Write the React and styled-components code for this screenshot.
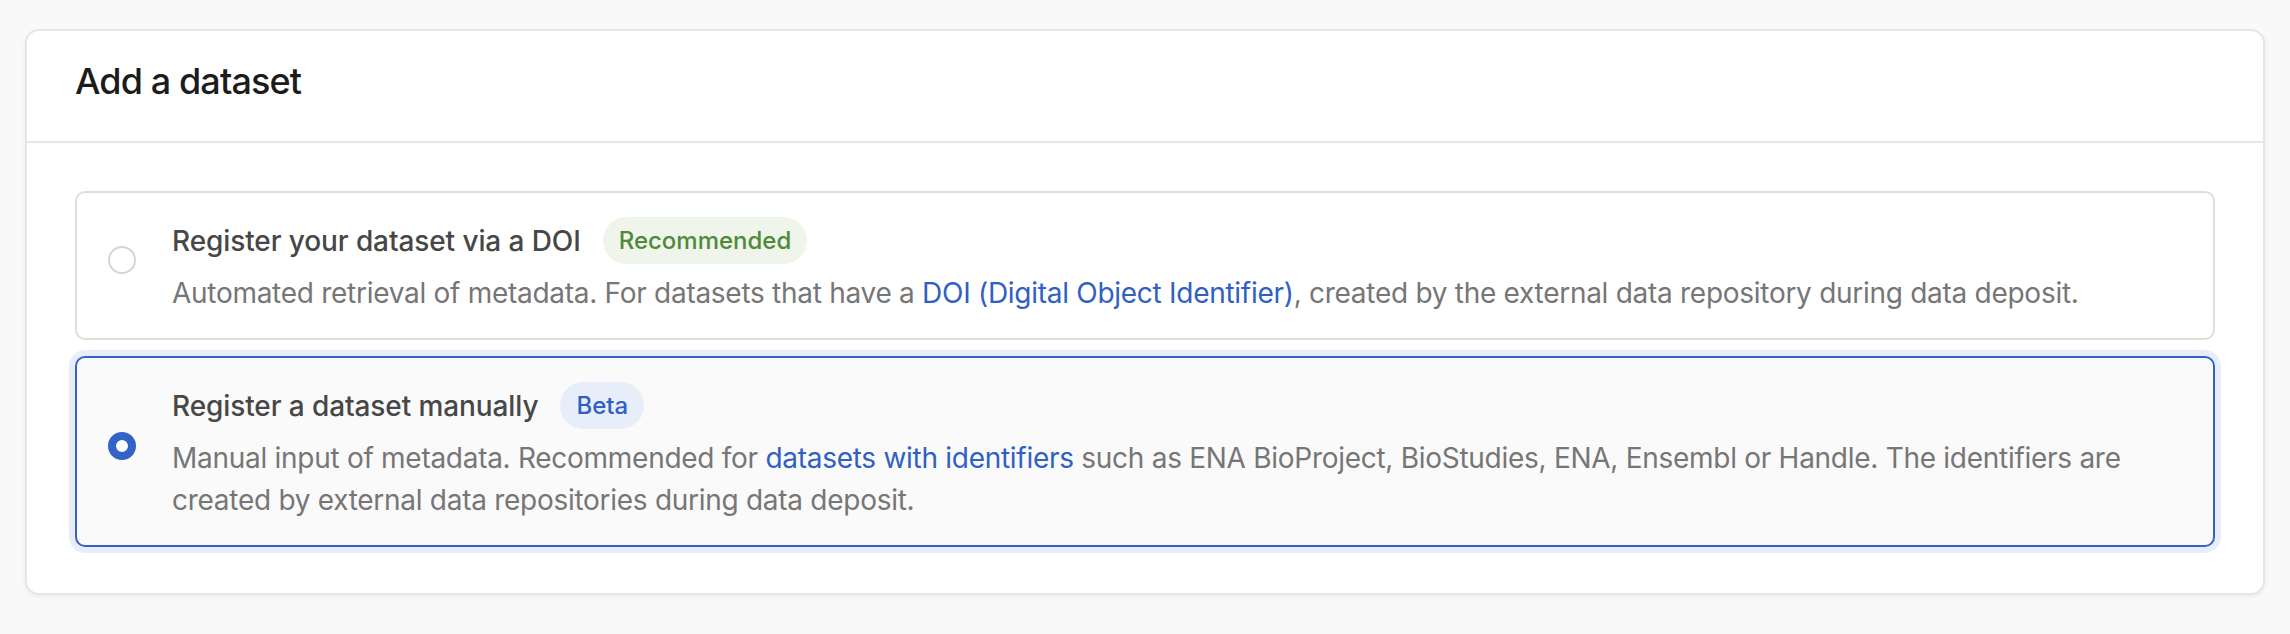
import styled, { createGlobalStyle } from "styled-components"

const GlobalStyle = createGlobalStyle`
  html, body {
    margin: 0;
    background: #f9f9f9;
    font-family: Inter, "Noto Sans", sans-serif;
  }
`;

const options = [
  {
    id: "doi",
    title: "Register your dataset via a DOI",
    badge: "Recommended",
    tone: "green",
    before: "Automated retrieval of metadata. For datasets that have a ",
    link: "DOI (Digital Object Identifier)",
    after: ", created by the external data repository during data deposit.",
  },
  {
    id: "manual",
    title: "Register a dataset manually",
    badge: "Beta",
    tone: "blue",
    before: "Manual input of metadata. Recommended for ",
    link: "datasets with identifiers",
    after:
      " such as ENA BioProject, BioStudies, ENA, Ensembl or Handle. The identifiers are created by external data repositories during data deposit.",
  },
];

export default function App() {
  const selected = "manual";

  return (
    <Page>
      <GlobalStyle />
      <Card>
        <Header>
          <Heading>Add a dataset</Heading>
        </Header>
        <Body>
          {options.map((opt) => (
            <Option key={opt.id} $active={opt.id === selected}>
              <Radio $checked={opt.id === selected} />
              <Content>
                <TitleRow>
                  <Title>{opt.title}</Title>
                  <Badge $tone={opt.tone}>{opt.badge}</Badge>
                </TitleRow>
                <Desc>
                  {opt.before}
                  <Link href="#">{opt.link}</Link>
                  {opt.after}
                </Desc>
              </Content>
            </Option>
          ))}
        </Body>
      </Card>
    </Page>
  );
}

const Page = styled.div`
  padding: 29px 25px 38px;
`;

const Card = styled.div`
  background: #fff;
  border: 2px solid #e6e6e6;
  border-radius: 14px;
  box-shadow: 0 2px 4px rgba(0, 0, 0, 0.05);
`;

const Header = styled.div`
  padding: 23px 48px 33px;
  border-bottom: 2px solid #e6e6e6;
`;

const Heading = styled.h2`
  margin: 0;
  font-size: 36px;
  line-height: 54px;
  font-weight: 500;
  letter-spacing: -0.9px;
  color: #1c1c1c;
`;

const Body = styled.div`
  padding: 48px 48px 46px;
  display: flex;
  flex-direction: column;
  gap: 16px;
`;

const Option = styled.label`
  display: flex;
  align-items: center;
  gap: 36px;
  padding: 24px 32px 24px 31px;
  border-radius: 10px;
  border: 2px solid ${(p) => (p.$active ? "#3363c6" : "#dedede")};
  background: ${(p) => (p.$active ? "#fafafa" : "#fff")};
  box-shadow: ${(p) => (p.$active ? "0 0 0 6px #e8eef9" : "none")};
  cursor: pointer;
`;

const Radio = styled.span`
  flex: none;
  box-sizing: border-box;
  width: 28px;
  height: 28px;
  border-radius: 50%;
  margin-bottom: 12px;
  background: #fff;
  border: ${(p) => (p.$checked ? "8px solid #3363c6" : "2px solid #d6d6d6")};
`;

const Content = styled.div`
  display: flex;
  flex-direction: column;
  gap: 8px;
  min-width: 0;
`;

const TitleRow = styled.div`
  display: flex;
  align-items: center;
  gap: 22px;
`;

const Title = styled.span`
  font-size: 28px;
  line-height: 42px;
  font-weight: 500;
  letter-spacing: -0.1px;
  color: #474747;
`;

const Badge = styled.span`
  padding: 6px 16px;
  border-radius: 24px;
  font-size: 24px;
  line-height: 35px;
  font-weight: 500;
  color: ${(p) => (p.$tone === "green" ? "#4e8a3a" : "#2f60c4")};
  background: ${(p) => (p.$tone === "green" ? "#eff5ea" : "#e8eef9")};
`;

const Desc = styled.p`
  margin: 0;
  font-size: 28px;
  line-height: 42px;
  letter-spacing: -0.28px;
  color: #767676;
`;

const Link = styled.a`
  color: #2f60c4;
  text-decoration: none;
`;
